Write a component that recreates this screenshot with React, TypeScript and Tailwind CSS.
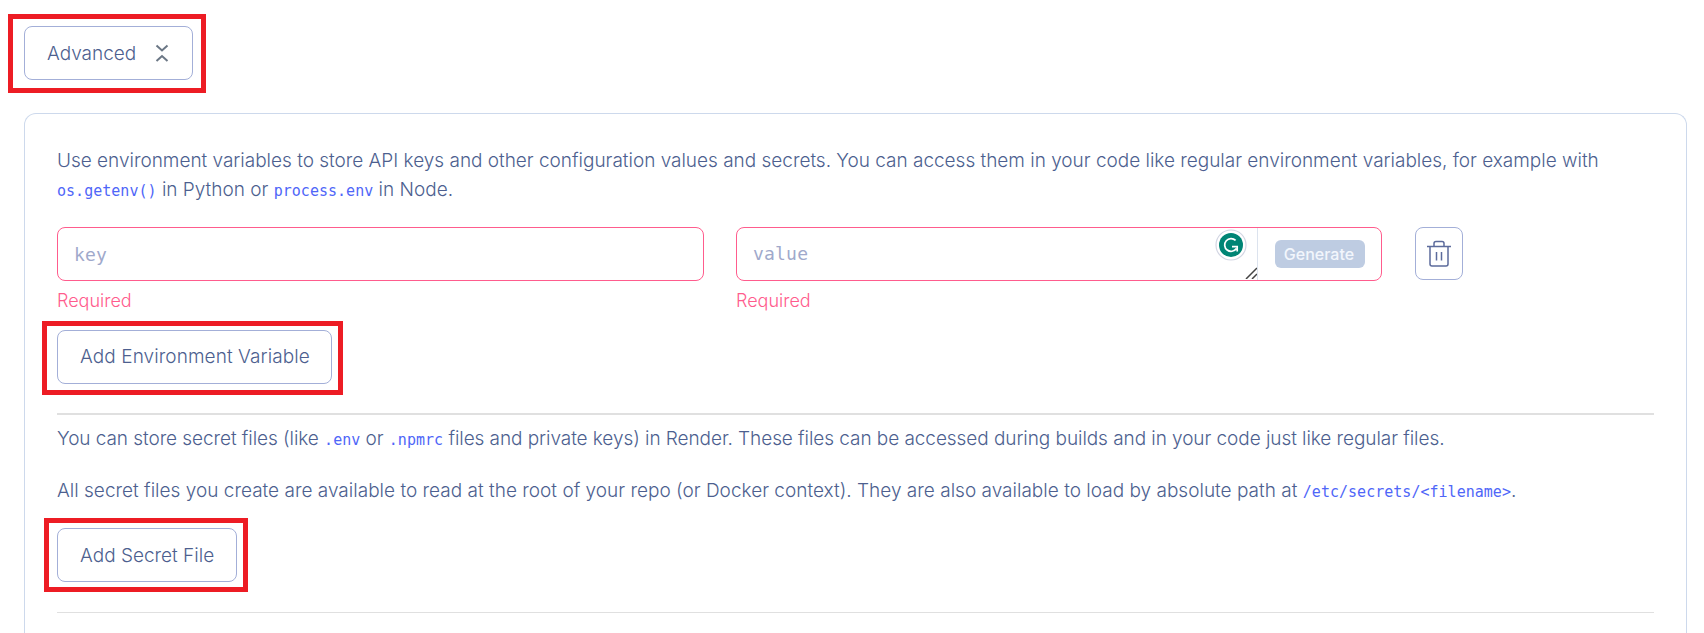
import type { ReactNode } from 'react';

function Code({ children }: { children: ReactNode }) {
  return <code className="font-['DejaVu_Sans_Mono',monospace] text-[15px] leading-none tracking-[0.02px] text-[#4f66f8]">{children}</code>;
}

function Highlight({ className }: { className: string }) {
  return <span className={`pointer-events-none absolute border-5 border-[#ed1c24] ${className}`} />;
}

function OutlineButton({ children, className, highlight }: { children: ReactNode; className: string; highlight: string }) {
  return (
    <div className={`relative h-[54px] shrink-0 ${className}`}>
      <button className="flex h-full w-full items-center justify-between whitespace-nowrap rounded-lg border border-[#a3afd8] px-[22px]">
        {children}
      </button>
      <Highlight className={highlight} />
    </div>
  );
}

function TrashIcon() {
  return (
    <svg width="24" height="28" viewBox="0 0 24 28" fill="none" stroke="#5c6b9c" strokeWidth="1.5">
      <path d="M0 6.5H24M3 6.5V24Q3 26 5 26H19Q21 26 21 24V6.5M7 6V3.5Q7 1.5 9 1.5H15Q17 1.5 17 3.5V6M9.5 12V20.5M14.5 12V20.5" />
    </svg>
  );
}

function GrammarBadge() {
  return (
    <svg className="absolute top-px right-[10px]" width="32" height="32" viewBox="0 0 32 32" fill="none">
      <circle cx="16" cy="16" r="15" fill="#fff" stroke="#d3d6e3" strokeWidth="1.2" />
      <circle cx="16" cy="16" r="12" fill="#008575" />
      <path d="M20.6 11.4A6.4 6.4 0 1 0 21.4 19.5M17 17.6H22.2V22.6" stroke="#fff" strokeWidth="1.7" />
    </svg>
  );
}

export default function App() {
  return (
    <main className="flex h-[633px] flex-col overflow-hidden bg-white pt-[26px] pr-[17px] pl-6 font-['Inter',sans-serif] text-[19px] leading-[29px] font-light text-[#4d5f8f]">
      <OutlineButton className="w-[169px]" highlight="-left-4 -top-3 h-[79px] w-[198px]">
        <span>Advanced</span>
        <svg className="mr-px" width="14" height="20" viewBox="0 0 14 20" fill="none" stroke="#6b7785" strokeWidth="2">
          <path d="M1.5 2.5L7 7.5L12.5 2.5M1.5 18L7 13L12.5 18" />
        </svg>
      </OutlineButton>

      <section className="mt-[33px] h-[560px] shrink-0 rounded-t-xl border border-b-0 border-[#cdd9ec] px-8 pt-8">
        <p className="whitespace-nowrap">
          <span className="tracking-[-0.015px]">Use environment variables to store API keys and other configuration values and secrets. You can access them in your code like regular environment variables, for example with</span>
          <br />
          <Code>os.getenv()</Code> in Python or <Code>process.env</Code> in Node.
        </p>

        <div className="mt-[23px] flex">
          <div className="w-[647px]">
            <div className="flex h-[54px] items-center rounded-lg border border-[#ff5c8d] px-4 font-['DejaVu_Sans_Mono',monospace] text-[18px] font-normal tracking-[0.2px] text-[#a0a9cb]">key</div>
            <div className="mt-[5px] text-[18px] text-[#ff5c8d]">Required</div>
          </div>
          <div className="ml-8 w-[646px]">
            <div className="flex h-[54px] rounded-lg border border-[#ff5c8d]">
              <div className="relative flex w-[521px] items-center border-r border-[#dce3ee] px-4 pb-0.5 font-['DejaVu_Sans_Mono',monospace] text-[18px] font-normal tracking-[0.2px] text-[#a0a9cb]">
                value
                <GrammarBadge />
                <svg className="absolute right-0 bottom-px" width="12" height="12" viewBox="0 0 12 12" stroke="#444" strokeWidth="1.5">
                  <path d="M1 12L12 1M7 12L12 7" />
                </svg>
              </div>
              <div className="flex flex-1 items-center pl-[17px]">
                <span className="flex h-7 w-[90px] items-center justify-center rounded-md bg-[#becce2] pr-0.5 text-[16px] font-medium text-[#f2f6fc]">Generate</span>
              </div>
            </div>
            <div className="mt-[5px] text-[18px] text-[#ff5c8d]">Required</div>
          </div>
          <button className="ml-[33px] flex h-[53px] w-12 items-center justify-center rounded-lg border border-[#a3afd8]">
            <TrashIcon />
          </button>
        </div>

        <OutlineButton className="mt-[15px] w-[275px]" highlight="-left-[15px] -top-[9px] h-[74px] w-[301px]">
          <span className="-mt-px tracking-[0.08px]">Add Environment Variable</span>
        </OutlineButton>

        <hr className="mt-[29px] h-0.5 border-0 bg-[#e0e0e0]" />

        <p className="mt-[9px] whitespace-nowrap tracking-[-0.065px]">
          You can store secret files (like <Code>.env</Code> or <Code>.npmrc</Code> files and private keys) in Render. These files can be accessed during builds and in your code just like regular files.
        </p>
        <p className="mt-[23px] whitespace-nowrap tracking-[0.01px]">
          All secret files you create are available to read at the root of your repo (or Docker context). They are also available to load by absolute path at <Code>/etc/secrets/&lt;filename&gt;</Code>.
        </p>

        <OutlineButton className="mt-[23px] w-[180px]" highlight="-left-[13px] -top-[10px] h-[74px] w-[204px]">
          <span>Add Secret File</span>
        </OutlineButton>

        <hr className="mt-[30px] h-px border-0 bg-[#e0e0e0]" />
      </section>
    </main>
  );
}
